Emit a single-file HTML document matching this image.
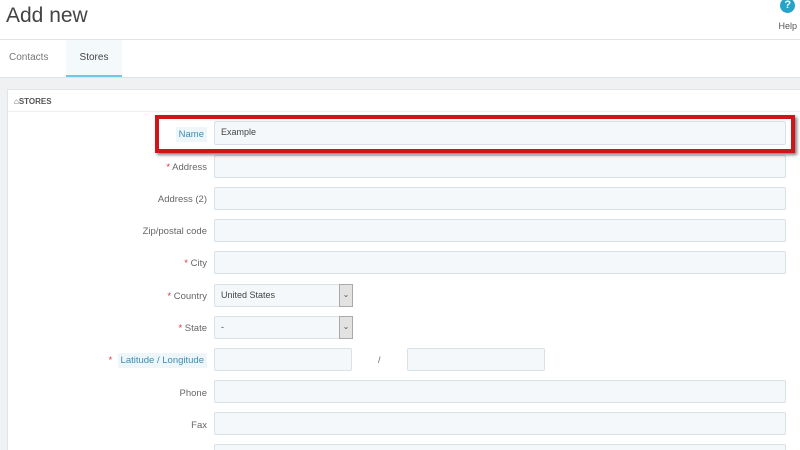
<!DOCTYPE html>
<html><head><style>
*{box-sizing:border-box;margin:0;padding:0}
html,body{width:800px;height:450px;overflow:hidden}
body{background:#eff1f2;font-family:"Liberation Sans",sans-serif;position:relative}
.top{position:absolute;left:0;top:0;width:800px;height:40px;background:#fff;border-bottom:1px solid #dfe3e5}
.top h1{position:absolute;left:6px;top:4px;font-weight:normal;font-size:21px;color:#444}
.help{position:absolute;right:3px;top:0;text-align:center;font-size:9px;color:#555}
.help .q{width:15px;height:15px;border-radius:50%;background:#25a3c9;color:#fff;font-weight:bold;font-size:11px;line-height:15px;margin:-2px auto 8px}
.tabs{position:absolute;left:0;top:40px;width:800px;height:38px;background:#fff;border-bottom:1px solid #dde2e4}
.tab{position:absolute;top:0;height:37px;line-height:36px;font-size:10px;color:#777}
.tab.act{background:#f4f9fb;border-bottom:2px solid #6ccae6;color:#444}
.panel{position:absolute;left:7px;top:89px;width:793px;height:361px;background:#fff;border:1px solid #e2e5e7;border-bottom:none;border-right:none}
.ph{height:22px;border-bottom:1px solid #eee;font-size:8px;color:#555;padding:7px 0 0 6px;font-weight:bold}
.lab{position:absolute;right:593px;font-size:9.5px;color:#666;text-align:right;white-space:nowrap}
.lab .s{color:#e2343d}
.lab .hl{background:#eef6fa;color:#3a8fb2;padding:2px 3px}
.in{position:absolute;left:214px;width:572px;height:23px;background:#f4f8fa;border:1px solid #d8e1e5;border-radius:2px;font-size:9px;color:#444;padding:5px 6px}
.sel{width:139px}
.sel i{position:absolute;right:-1px;top:-1px;width:14px;height:23px;background:#e2e2e2;border:1px solid #aaa;font-style:normal;font-size:8px;text-align:center;line-height:20px;color:#555}
.red{position:absolute;left:155px;top:115px;width:640px;height:38px;border:4px solid #d0141b;box-shadow:2px 2px 3px rgba(0,0,0,.5)}
</style></head><body>
<div class="top"><h1>Add new</h1><div class="help"><div class="q">?</div>Help</div></div>
<div class="tabs"><div class="tab" style="left:9px">Contacts</div><div class="tab act" style="left:66px;width:56px;text-align:center">Stores</div></div>
<div class="panel"><div class="ph">&#8962;STORES</div></div>
<div class="lab" style="top:129px"><span class="hl">Name</span></div>
<div class="in" style="top:121px;height:24px">Example</div>
<div class="lab" style="top:162px"><span class="s">*</span> Address</div>
<div class="in" style="top:155px"></div>
<div class="lab" style="top:194px">Address (2)</div>
<div class="in" style="top:187px"></div>
<div class="lab" style="top:226px">Zip/postal code</div>
<div class="in" style="top:219px"></div>
<div class="lab" style="top:258px"><span class="s">*</span> City</div>
<div class="in" style="top:251px"></div>
<div class="lab" style="top:291px"><span class="s">*</span> Country</div>
<div class="in sel" style="top:284px">United States<i>&#8964;</i></div>
<div class="lab" style="top:323px"><span class="s">*</span> State</div>
<div class="in sel" style="top:316px">-<i>&#8964;</i></div>
<div class="lab" style="top:355px"><span class="s">*</span> &nbsp;<span class="hl">Latitude / Longitude</span></div>
<div class="in" style="top:348px;width:138px"></div>
<div style="position:absolute;left:378px;top:355px;font-size:9px;color:#666">/</div>
<div class="in" style="top:348px;left:407px;width:138px"></div>
<div class="lab" style="top:388px">Phone</div>
<div class="in" style="top:380px"></div>
<div class="lab" style="top:420px">Fax</div>
<div class="in" style="top:412px"></div>
<div class="in" style="top:444px;height:6px;border-bottom:none"></div>
<div class="red"></div>
</body></html>
